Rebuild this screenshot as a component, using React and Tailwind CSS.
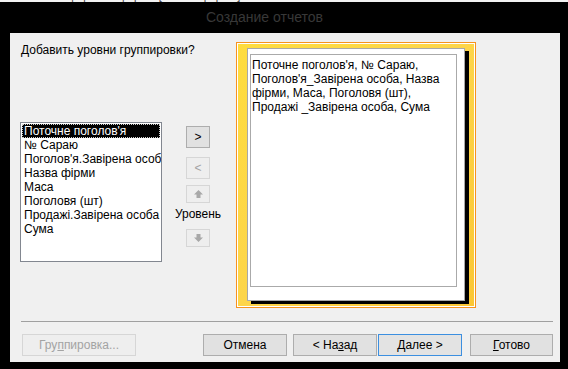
import React from 'react';

const font = { fontFamily: '"Liberation Sans", Arial, sans-serif' };

const fields = [
  "Поточне поголов'я",
  '№ Сараю',
  "Поголов'я.Завірена особа",
  'Назва фірми',
  'Маса',
  'Поголовя (шт)',
  'Продажі.Завірена особа',
  'Сума',
];

function ArrowUp({ down }) {
  return (
    <svg width="9" height="8" viewBox="0 0 9 8" className={down ? 'rotate-180' : ''}>
      <path d="M4.5 0 L9 4.5 L6.5 4.5 L6.5 8 L2.5 8 L2.5 4.5 L0 4.5 Z" fill="#a8a8a8" />
    </svg>
  );
}

function Btn({ children, disabled, focused, className = '' }) {
  return (
    <div
      className={`h-[22px] flex items-center justify-center text-[12px] border ${
        disabled
          ? 'border-[#d6d6d6] bg-[#eeeeee] text-[#a3a3a3]'
          : focused
          ? 'border-[#3c8fe0] bg-[#e3e3e3] text-black'
          : 'border-[#adadad] bg-[#e1e1e1] text-black'
      } ${className}`}
    >
      {children}
    </div>
  );
}

export default function App() {
  return (
    <div className="w-[568px] h-[369px] bg-black flex flex-col overflow-hidden" style={font}>
      {/* обрезанная лента Access сверху */}
      <div className="h-[2px] bg-[#f2f2f2] overflow-hidden flex text-[11px] text-[#444] leading-[11px]">
        <span className="ml-[68px] -mt-[9px]">форм</span>
        <span className="ml-[22px] -mt-[9px]">формы [=Актив формы]</span>
        <span className="ml-[78px] -mt-[9px]">отчетов</span>
        <span className="ml-[22px] -mt-[9px]">отчет</span>
      </div>

      {/* заголовок */}
      <div className="h-[31px] flex items-center pl-[206px]">
        <span className="text-[14px] text-[#383838]">Создание отчетов</span>
      </div>

      <div className="flex">
        <div className="w-[10px]" />
        <div className="w-[550px] h-[329px] bg-[#f0f0f0] flex flex-col pt-[9px] pb-[6px]">
          <div className="flex h-[266px]">
            {/* левая часть */}
            <div className="w-[226px] pl-[10px] flex flex-col">
              <div className="ml-[1px] text-[12px] text-black leading-[16px]">
                Добавить уровни группировки?
              </div>
              <div className="flex mt-[64px]">
                <div className="w-[142px] h-[140px] bg-white border border-[#828790] p-[1px] overflow-hidden">
                  {fields.map((f, i) => (
                    <div
                      key={i}
                      className={`h-[14px] leading-[14px] text-[12px] pl-[2px] whitespace-nowrap ${
                        i === 0 ? 'bg-black text-white outline outline-1 outline-dotted outline-[#cccccc] -outline-offset-1' : 'text-black'
                      }`}
                    >
                      {f}
                    </div>
                  ))}
                </div>
                <div className="w-[56px] ml-[8px] flex flex-col items-center pt-[4px]">
                  <Btn className="w-[24px]">&gt;</Btn>
                  <Btn disabled className="w-[24px] mt-[9px]">&lt;</Btn>
                  <div className="w-[24px] h-[18px] mt-[6px] border border-[#d6d6d6] bg-[#eeeeee] flex items-center justify-center">
                    <ArrowUp />
                  </div>
                  <div className="mt-[3px] h-[16px] leading-[16px] text-[12px] text-black">Уровень</div>
                  <div className="w-[24px] h-[18px] mt-[7px] border border-[#d6d6d6] bg-[#eeeeee] flex items-center justify-center">
                    <ArrowUp down />
                  </div>
                </div>
              </div>
            </div>

            {/* превью */}
            <div className="w-[240px] h-[266px] border border-[#f7931e] p-[1px] bg-white">
              <div className="w-full h-full bg-gradient-to-br from-[#fedc3e] via-[#fdd54a] to-[#fbc734] pl-[9px] pt-[4px]">
                <div className="w-[218px] h-[253px] bg-white border border-[#a8a8a8] shadow-[4px_3px_0_0_#000] pl-[2px] pt-[5px]">
                  <div className="w-[207px] h-[233px] border border-[#aaaaaa] pl-[1px] pt-[3px] text-[12px] leading-[14px] text-black">
                    <div>Поточне поголов'я, № Сараю,</div>
                    <div>Поголов'я_Завірена особа, Назва</div>
                    <div>фірми, Маса, Поголовя (шт),</div>
                    <div>Продажі _Завірена особа, Сума</div>
                  </div>
                </div>
              </div>
            </div>
          </div>

          <div className="ml-[11px] w-[532px] h-[1px] bg-[#a0a0a0] mt-[13px]" />

          <div className="flex mt-[12px] pl-[12px]">
            <Btn disabled className="w-[114px]">
              <span>Гру<span className="underline">п</span>пировка...</span>
            </Btn>
            <Btn className="w-[84px] ml-[67px]">Отмена</Btn>
            <Btn className="w-[84px] ml-[6px]">
              <span>&lt; На<span className="underline">з</span>ад</span>
            </Btn>
            <Btn focused className="w-[84px] ml-[1px]">
              <span><span className="underline">Д</span>алее &gt;</span>
            </Btn>
            <Btn className="w-[83px] ml-[8px]">
              <span><span className="underline">Г</span>отово</span>
            </Btn>
          </div>
        </div>
      </div>
    </div>
  );
}
